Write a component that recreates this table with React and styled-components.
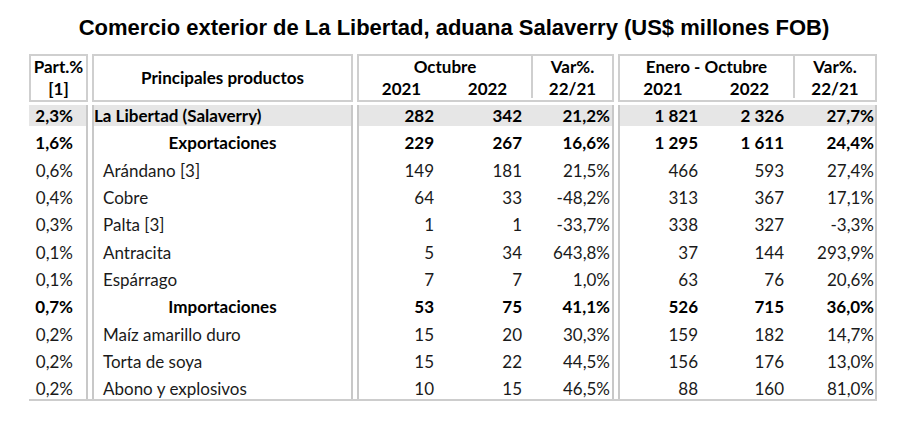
import styled, { createGlobalStyle } from "styled-components";

const GlobalStyle = createGlobalStyle`
  body {
    margin: 0;
    background: #fff;
  }
`;

const rows = [
  { part: "2,3%", name: "La Libertad (Salaverry)", kind: "total", oct: ["282", "342", "21,2%"], ene: ["1 821", "2 326", "27,7%"] },
  { part: "1,6%", name: "Exportaciones", kind: "group", oct: ["229", "267", "16,6%"], ene: ["1 295", "1 611", "24,4%"] },
  { part: "0,6%", name: "Arándano [3]", oct: ["149", "181", "21,5%"], ene: ["466", "593", "27,4%"] },
  { part: "0,4%", name: "Cobre", oct: ["64", "33", "-48,2%"], ene: ["313", "367", "17,1%"] },
  { part: "0,3%", name: "Palta [3]", oct: ["1", "1", "-33,7%"], ene: ["338", "327", "-3,3%"] },
  { part: "0,1%", name: "Antracita", oct: ["5", "34", "643,8%"], ene: ["37", "144", "293,9%"] },
  { part: "0,1%", name: "Espárrago", oct: ["7", "7", "1,0%"], ene: ["63", "76", "20,6%"] },
  { part: "0,7%", name: "Importaciones", kind: "group", oct: ["53", "75", "41,1%"], ene: ["526", "715", "36,0%"] },
  { part: "0,2%", name: "Maíz amarillo duro", oct: ["15", "20", "30,3%"], ene: ["159", "182", "14,7%"] },
  { part: "0,2%", name: "Torta de soya", oct: ["15", "22", "44,5%"], ene: ["156", "176", "13,0%"] },
  { part: "0,2%", name: "Abono y explosivos", oct: ["10", "15", "46,5%"], ene: ["88", "160", "81,0%"] },
];

// column set-up shared by header and body
const GRID = "59px 261px 257px 259px";
const OCT_COLS = "85px 87px 1fr";
const ENE_COLS = "86px 87px 1fr";
const OCT_PAD = [10, 9, 2];
const ENE_PAD = [8, 9, 1];

export default function App() {
  return (
    <Page>
      <GlobalStyle />
      <Title>Comercio exterior de La Libertad, aduana Salaverry (US$ millones FOB)</Title>

      <Table>
        <HeadRow>
          <HeadBox $stack>
            <span>Part.%</span>
            <span>[1]</span>
          </HeadBox>
          <HeadBox>Principales productos</HeadBox>
          <PeriodBox $cols={OCT_COLS}>
            <PeriodName>Octubre</PeriodName>
            <YearHead>2021</YearHead>
            <YearHead>2022</YearHead>
            <VarHead>
              <span>Var%.</span>
              <span>22/21</span>
            </VarHead>
          </PeriodBox>
          <PeriodBox $cols={ENE_COLS}>
            <PeriodName>Enero - Octubre</PeriodName>
            <YearHead>2021</YearHead>
            <YearHead>2022</YearHead>
            <VarHead>
              <span>Var%.</span>
              <span>22/21</span>
            </VarHead>
          </PeriodBox>
        </HeadRow>

        <Body>
          {rows.map((r, i) => {
            const bold = !!r.kind;
            const shade = r.kind === "total";
            return (
              <BodyRow key={i} $first={i === 0}>
                <PartCell $bold={bold} $shade={shade}>{r.part}</PartCell>
                <NameCell $bold={bold} $shade={shade} $kind={r.kind}>{r.name}</NameCell>
                <NumGroup $cols={OCT_COLS} $shade={shade}>
                  {r.oct.map((v, j) => (
                    <Num key={j} $bold={bold} $pad={OCT_PAD[j]}>{v}</Num>
                  ))}
                </NumGroup>
                <NumGroup $cols={ENE_COLS} $shade={shade}>
                  {r.ene.map((v, j) => (
                    <Num key={j} $bold={bold} $pad={ENE_PAD[j]}>{v}</Num>
                  ))}
                </NumGroup>
              </BodyRow>
            );
          })}
        </Body>
      </Table>
    </Page>
  );
}

const Page = styled.div`
  width: 903px;
  height: 424px;
  padding-top: 15px;
  box-sizing: border-box;
  font-family: Lato, "Liberation Sans", sans-serif;
  color: #111;
`;

const Title = styled.h1`
  margin: 0;
  padding-left: 5px;
  text-align: center;
  font-family: "Liberation Sans", Arial, sans-serif;
  font-weight: 700;
  font-size: 22px;
  line-height: 26px;
  color: #000;
`;

const Table = styled.div`
  margin: 13px 0 0 29px;
  width: 848px;
`;

const HeadRow = styled.div`
  display: grid;
  grid-template-columns: ${GRID};
  column-gap: 4px;
  height: 46px;
  font-weight: 700;
  font-size: 17px;
  color: #000;
`;

const HeadBox = styled.div`
  border: 2px solid #cfcfcf;
  display: flex;
  flex-direction: column;
  align-items: center;
  justify-content: ${(p) => (p.$stack ? "flex-start" : "center")};
  line-height: 22px;
`;

const PeriodBox = styled.div`
  border: 2px solid #cfcfcf;
  display: grid;
  grid-template-columns: ${(p) => p.$cols};
  grid-template-rows: 22px 20px;
  line-height: 22px;
`;

const PeriodName = styled.div`
  grid-column: 1 / 3;
  text-align: center;
`;

const YearHead = styled.div`
  grid-row: 2;
  text-align: center;
`;

const VarHead = styled.div`
  grid-column: 3;
  grid-row: 1 / 3;
  border-left: 2px solid #cfcfcf;
  display: flex;
  flex-direction: column;
  align-items: center;
`;

const Body = styled.div`
  margin-top: 5px;
  border-bottom: 2px solid #cdcdcd;
  font-size: 17px;
`;

const BodyRow = styled.div`
  display: grid;
  grid-template-columns: ${GRID};
  column-gap: 4px;
  height: ${(p) => (p.$first ? "21px" : "27.35px")};
  line-height: ${(p) => (p.$first ? "21px" : "20px")};
`;

const Cell = styled.div`
  display: flex;
  align-items: flex-end;
  background: ${(p) => (p.$shade ? "#e6e6e6" : "transparent")};
  font-weight: ${(p) => (p.$bold ? 700 : 400)};
  color: ${(p) => (p.$bold ? "#000" : "#1a1a1a")};
  white-space: nowrap;
`;

const PartCell = styled(Cell)`
  justify-content: flex-end;
  padding-right: 13px;
  border-right: 2px solid #c8c8c8;
`;

const NameCell = styled(Cell)`
  border-left: 2px solid #c8c8c8;
  border-right: 2px solid #c8c8c8;
  justify-content: ${(p) => (p.$kind === "group" ? "center" : "flex-start")};
  padding-left: ${(p) => (p.$kind ? "0" : "9px")};
`;

const NumGroup = styled.div`
  display: grid;
  grid-template-columns: ${(p) => p.$cols};
  border-left: 2px solid #c8c8c8;
  border-right: 2px solid #c8c8c8;
  background: ${(p) => (p.$shade ? "#e6e6e6" : "transparent")};
`;

const Num = styled.div`
  align-self: end;
  text-align: right;
  padding-right: ${(p) => p.$pad}px;
  font-weight: ${(p) => (p.$bold ? 700 : 400)};
  color: ${(p) => (p.$bold ? "#000" : "#1a1a1a")};
  white-space: nowrap;
`;
